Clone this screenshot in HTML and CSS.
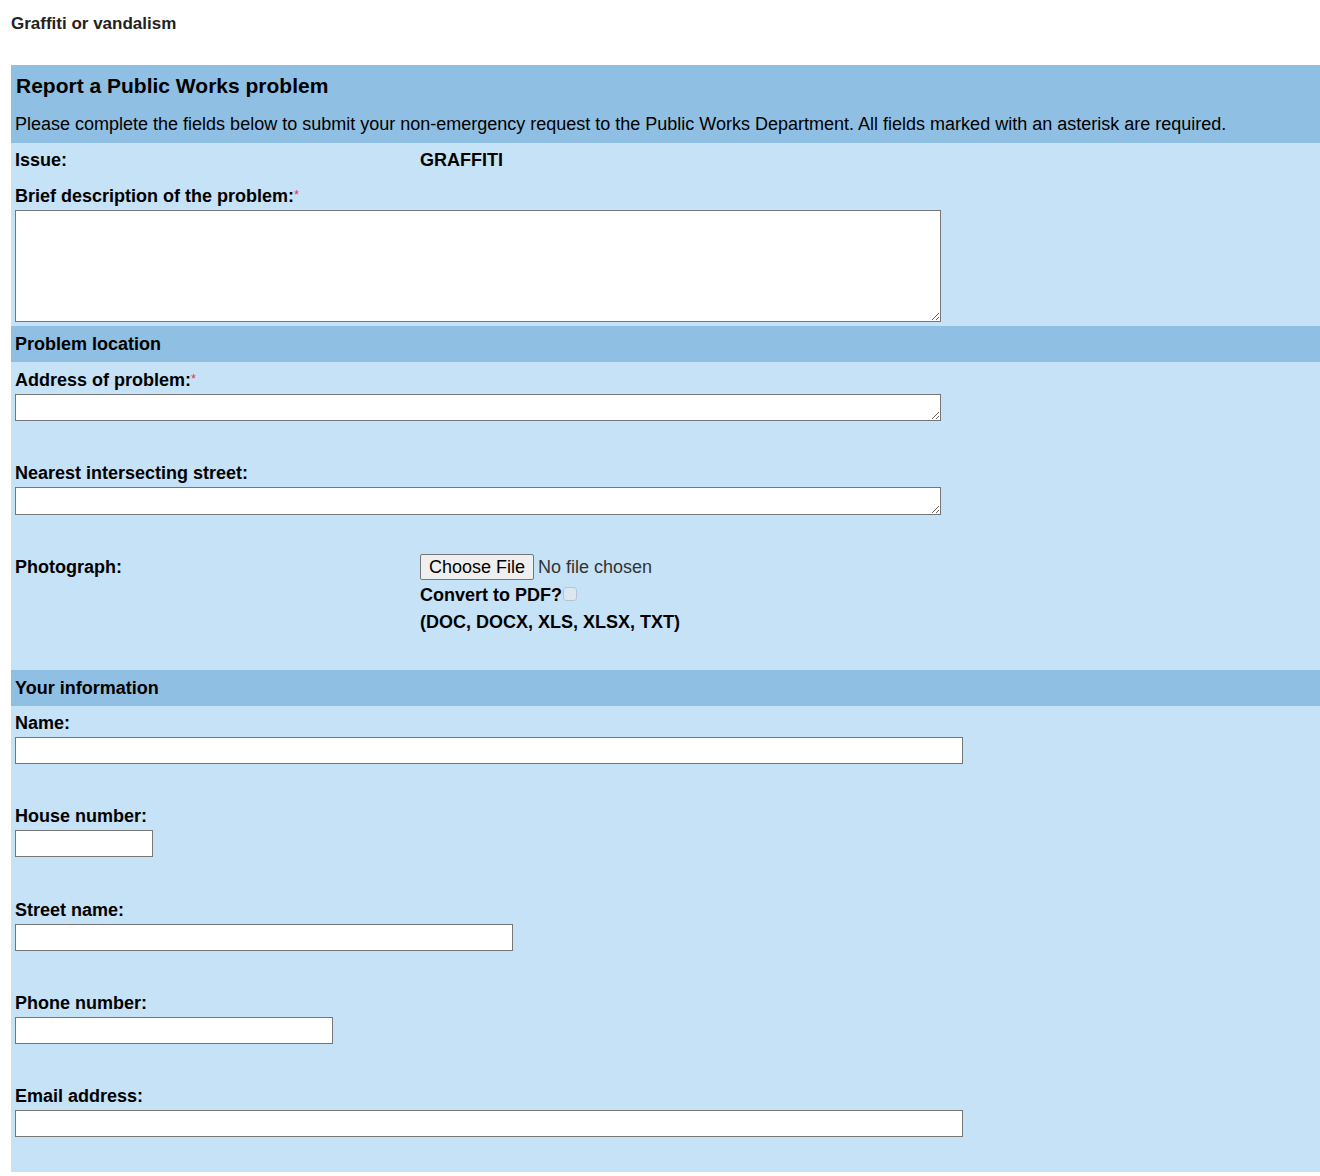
FILE: index.html
```html
<!DOCTYPE html>
<html lang="en">

<head>
    <meta charset="UTF-8">
    <meta name="viewport" content="width=device-width, initial-scale=1.0">
    <title>Report a Public Works problem</title>
    <link rel="stylesheet" href="styles.css">
</head>

<body>
    <p class="crumb">Graffiti or vandalism</p>

    <form class="report-form">
        <div class="band intro">
            <h1>Report a Public Works problem</h1>
            <p>Please complete the fields below to submit your non-emergency request to the Public Works Department. All fields marked with an asterisk are required.</p>
        </div>

        <div class="section">
            <div class="split">
                <span class="label">Issue:</span>
                <span class="value">GRAFFITI</span>
            </div>
            <div class="field tight">
                <label class="label" for="description">Brief description of the problem:<span class="req">*</span></label>
                <textarea id="description" class="wide desc"></textarea>
            </div>
        </div>

        <div class="band">
            <h2>Problem location</h2>
        </div>

        <div class="section loc">
            <div class="field">
                <label class="label" for="address">Address of problem:<span class="req">*</span></label>
                <textarea id="address" class="wide line"></textarea>
            </div>
            <div class="field">
                <label class="label" for="cross-street">Nearest intersecting street:</label>
                <textarea id="cross-street" class="wide line tall"></textarea>
            </div>
            <div class="split photo">
                <span class="label">Photograph:</span>
                <div class="upload">
                    <input type="file" class="file">
                    <label class="label">Convert to PDF?<input type="checkbox" class="pdf"></label>
                    <span class="label">(DOC, DOCX, XLS, XLSX, TXT)</span>
                </div>
            </div>
        </div>

        <div class="band">
            <h2>Your information</h2>
        </div>

        <div class="section last">
            <div class="field">
                <label class="label" for="name">Name:</label>
                <input type="text" id="name" class="text full">
            </div>
            <div class="field wider">
                <label class="label" for="house">House number:</label>
                <input type="text" id="house" class="text house">
            </div>
            <div class="field">
                <label class="label" for="street">Street name:</label>
                <input type="text" id="street" class="text street">
            </div>
            <div class="field">
                <label class="label" for="phone">Phone number:</label>
                <input type="text" id="phone" class="text phone">
            </div>
            <div class="field">
                <label class="label" for="email">Email address:</label>
                <input type="text" id="email" class="text full">
            </div>
        </div>
    </form>
</body>

</html>
```

FILE: styles.css
```css
body {
    font-family: "Liberation Sans", Arial, sans-serif;
    margin: 0;
    padding: 0;
    background-color: #fff;
    color: #000;
}

.crumb {
    margin: 0;
    padding: 13px 0 0 11px;
    height: 65px;
    box-sizing: border-box;
    font-size: 17px;
    line-height: 22px;
    font-weight: bold;
    color: #222;
}

.report-form {
    margin-left: 11px;
    background-color: #c6e2f6;
}

.band {
    background-color: #8fbfe3;
    padding: 0 4px;
}

.band h2 {
    margin: 0;
    font-size: 18px;
    line-height: 36px;
}

.intro {
    padding: 8px 4px 0;
    height: 78px;
    box-sizing: border-box;
}

.intro h1 {
    margin: 0 0 0 1px;
    font-size: 21px;
    line-height: 26px;
}

.intro p {
    margin: 0;
    padding-top: 14px;
    font-size: 18px;
    line-height: 22px;
}

.section {
    padding: 6px 4px 4px;
}

.section.loc {
    padding-top: 7px;
}

.section.last {
    padding-bottom: 35px;
}

.label {
    display: block;
    font-size: 18px;
    line-height: 22px;
    font-weight: bold;
}

.req {
    color: #f0304a;
    font-size: 13px;
    line-height: 1;
    vertical-align: 3px;
    font-weight: normal;
}

.split {
    display: flex;
}

.split > .label {
    width: 405px;
    flex-shrink: 0;
}

.value {
    font-size: 18px;
    line-height: 22px;
    font-weight: bold;
}

.field {
    margin-bottom: 41px;
}

.field.wider {
    margin-bottom: 42px;
}

.field.tight {
    margin: 14px 0 0;
}

.field .label {
    margin-bottom: 3px;
}

.field:last-child {
    margin-bottom: 0;
}

textarea,
.text {
    display: block;
    box-sizing: border-box;
    margin: 0;
    border: 1px solid #767676;
    background-color: #fff;
    font-family: "Liberation Mono", monospace;
    font-size: 13px;
}

textarea.wide {
    width: 926px;
}

textarea.desc {
    height: 112px;
}

textarea.line {
    height: 27px;
}

textarea.tall {
    height: 28px;
}

.text {
    height: 27px;
}

.text.full {
    width: 948px;
}

.text.house {
    width: 138px;
}

.text.street {
    width: 498px;
}

.text.phone {
    width: 318px;
}

.photo {
    margin-top: -2px;
    padding-bottom: 30px;
}

.photo > .label {
    padding-top: 2px;
}

.upload {
    display: flex;
    flex-direction: column;
    align-items: flex-start;
}

.file {
    font-family: "Liberation Sans", Arial, sans-serif;
    font-size: 18px;
    color: #333;
    height: 26px;
    margin: 0 0 2px;
}

.file::file-selector-button {
    font-family: inherit;
    font-size: 18px;
    color: #000;
    height: 26px;
    padding: 0 8px;
    margin-right: 4px;
    border: 1px solid #767676;
    border-radius: 2px;
    background-color: #efefef;
}

.upload .label {
    line-height: 27px;
}

/* pale, unticked checkbox */
.pdf {
    appearance: none;
    width: 14px;
    height: 14px;
    margin: 0 0 0 1px;
    vertical-align: 0;
    border: 1px solid #b8c5d1;
    border-radius: 3px;
    background-color: #dae6f1;
}
```
